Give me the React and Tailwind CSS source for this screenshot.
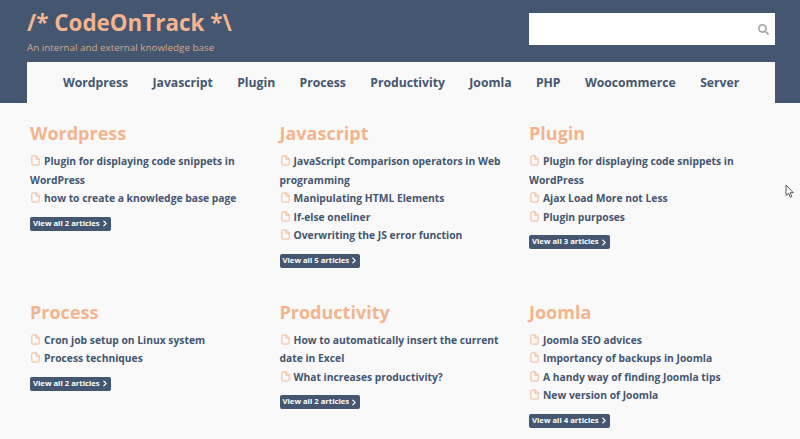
import { FiFile } from 'react-icons/fi';
import { FaChevronRight, FaSearch } from 'react-icons/fa';

const navItems = ['Wordpress', 'Javascript', 'Plugin', 'Process', 'Productivity', 'Joomla', 'PHP', 'Woocommerce', 'Server'];

const sections = [
  {
    title: 'Wordpress',
    count: 2,
    articles: ['Plugin for displaying code snippets in WordPress', 'how to create a knowledge base page'],
  },
  {
    title: 'Javascript',
    count: 5,
    articles: ['JavaScript Comparison operators in Web programming', 'Manipulating HTML Elements', 'If-else oneliner', 'Overwriting the JS error function'],
  },
  {
    title: 'Plugin',
    count: 3,
    articles: ['Plugin for displaying code snippets in WordPress', 'Ajax Load More not Less', 'Plugin purposes'],
  },
  {
    title: 'Process',
    count: 2,
    articles: ['Cron job setup on Linux system', 'Process techniques'],
  },
  {
    title: 'Productivity',
    count: 2,
    articles: ['How to automatically insert the current date in Excel', 'What increases productivity?'],
  },
  {
    title: 'Joomla',
    count: 4,
    articles: ['Joomla SEO advices', 'Importancy of backups in Joomla', 'A handy way of finding Joomla tips', 'New version of Joomla'],
  },
];

function Section({ title, count, articles }) {
  return (
    <div className="pr-[20px]">
      <h2 className="text-[18px] leading-[26px] font-bold text-[#f3b48e] mb-[6px]">{title}</h2>
      <ul className="mb-[9px]">
        {articles.map((article) => (
          <li key={article} className="text-[10.3px] leading-[18.5px] font-bold text-[#445670]">
            <FiFile className="inline-block w-[11px] h-[11px] text-[#f3b48e] mr-[3px] align-[-1px]" />
            {article}
          </li>
        ))}
      </ul>
      <a className="flex w-fit items-center gap-[2px] h-[14px] px-[3px] rounded-[2px] bg-[#445670] text-white text-[7.7px] font-bold">
        View all {count} articles
        <FaChevronRight className="w-[6px] h-[7px]" />
      </a>
    </div>
  );
}

export default function App() {
  return (
    <div className="relative h-[439px] w-[800px] overflow-hidden bg-[#f9f9f9] font-['Open_Sans',sans-serif]">
      <header className="h-[103px] bg-[#445670] pl-[27px] pr-[25px]">
        <div className="flex h-[62px] justify-between">
          <div>
            <h1 className="pt-[5px] text-[22.4px] leading-[36px] font-bold text-[#f3b48e]">/* CodeOnTrack *\</h1>
            <p className="text-[9.85px] leading-[14px] mt-[-1px] text-[#d3a98f]">An internal and external knowledge base</p>
          </div>
          <div className="mt-[13px] flex h-[32px] w-[246px] items-center justify-end bg-white pr-[6px]">
            <FaSearch className="w-[11px] h-[11px] text-[#aaaaaa]" />
          </div>
        </div>
        <nav className="flex h-[41px] pt-[1px] items-center gap-[24.4px] bg-[#f9f9f9] pl-[36px]">
          {navItems.map((item) => (
            <a key={item} className="text-[12.2px] font-bold text-[#445670]">{item}</a>
          ))}
        </nav>
      </header>
      <main className="grid w-[748.5px] ml-[30px] grid-cols-3 pt-[17px] gap-y-[31px]">
        {sections.map((section) => (
          <Section key={section.title} {...section} />
        ))}
      </main>
      {/* mouse pointer caught in the screenshot */}
      <svg className="absolute left-[785px] top-[184px]" width="10" height="15" viewBox="0 0 10 15">
        <path d="M1 1v10.500l2.500-2.200 1.800 4 1.600-.7-1.800-3.900h3.200z" fill="#fff" stroke="#555" strokeWidth="1" />
      </svg>
    </div>
  );
}
